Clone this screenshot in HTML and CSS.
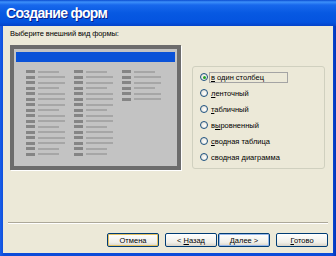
FILE: index.html
```html
<!DOCTYPE html>
<html lang="ru">
<head>
    <meta charset="UTF-8">
    <title>Создание форм</title>
    <link rel="stylesheet" href="styles.css">
</head>
<body>
    <div class="window">
        <div class="titlebar">Создание форм</div>
        <div class="client">
            <div class="prompt">Выберите внешний вид формы:</div>
            <div class="content">
                <div class="preview">
                    <div class="preview-head"></div>
                    <div class="preview-cols">
                        <div class="pcol">
                            <div class="prow"><i></i><b class="short"></b></div>
                            <div class="prow"><i></i><b></b></div>
                            <div class="prow"><i></i><b></b></div>
                            <div class="prow"><i></i><b class="short"></b></div>
                            <div class="prow"><i></i><b></b></div>
                            <div class="prow"><i></i><b></b></div>
                            <div class="prow"><i></i><b></b></div>
                            <div class="prow"><i></i><b class="short"></b></div>
                            <div class="prow"><i></i><b></b></div>
                            <div class="prow"><i></i><b></b></div>
                            <div class="prow"><i></i><b class="short"></b></div>
                            <div class="prow"><i></i><b></b></div>
                            <div class="prow"><i></i><b></b></div>
                            <div class="prow"><i></i><b></b></div>
                            <div class="prow"><i></i><b class="short"></b></div>
                            <div class="prow"><i></i><b class="short"></b></div>
                        </div>
                        <div class="pcol">
                            <div class="prow"><i></i><b class="short"></b></div>
                            <div class="prow"><i></i><b></b></div>
                            <div class="prow"><i></i><b></b></div>
                            <div class="prow"><i></i><b class="short"></b></div>
                            <div class="prow"><i></i><b></b></div>
                            <div class="prow"><i></i><b></b></div>
                            <div class="prow"><i></i><b></b></div>
                            <div class="prow"><i></i><b class="short"></b></div>
                            <div class="prow"><i></i><b></b></div>
                            <div class="prow"><i></i><b></b></div>
                            <div class="prow"><i></i><b class="short"></b></div>
                            <div class="prow"><i></i><b></b></div>
                            <div class="prow"><i></i><b></b></div>
                            <div class="prow"><i></i><b></b></div>
                            <div class="prow"><i></i><b class="short"></b></div>
                            <div class="prow"><i></i><b class="short"></b></div>
                        </div>
                        <div class="pcol">
                            <div class="prow"><i></i><b class="short"></b></div>
                            <div class="prow"><i></i><b></b></div>
                            <div class="prow"><i></i><b></b></div>
                            <div class="prow"><i></i><b class="short"></b></div>
                            <div class="prow"><i></i><b></b></div>
                            <div class="prow"><i></i><b></b></div>
                        </div>
                    </div>
                </div>
                <div class="options">
                    <div class="opt"><span class="radio checked"></span><span class="opt-text focus"><u>в</u> один столбец</span></div>
                    <div class="opt"><span class="radio"></span><span class="opt-text"><u>л</u>енточный</span></div>
                    <div class="opt"><span class="radio"></span><span class="opt-text"><u>т</u>абличный</span></div>
                    <div class="opt"><span class="radio"></span><span class="opt-text">в<u>ы</u>ровненный</span></div>
                    <div class="opt"><span class="radio"></span><span class="opt-text"><u>с</u>водная таблица</span></div>
                    <div class="opt"><span class="radio"></span><span class="opt-text">сводная <u>д</u>иаграмма</span></div>
                </div>
            </div>
            <div class="footer">
                <div class="separator"></div>
                <div class="buttons">
                    <button class="btn btn-cancel">Отмена</button>
                    <button class="btn btn-back">&lt; <u>Н</u>азад</button>
                    <button class="btn btn-next"><u>Д</u>алее &gt;</button>
                    <button class="btn btn-finish"><u>Г</u>отово</button>
                </div>
            </div>
        </div>
    </div>
</body>
</html>
```

FILE: styles.css
```css
* {
    margin: 0;
    padding: 0;
    box-sizing: border-box;
}

body {
    font-family: "Liberation Sans", Arial, sans-serif;
    background-color: #0b4bd9;
    width: 336px;
    height: 256px;
    overflow: hidden;
}


.window {
    display: flex;
    flex-direction: column;
    width: 336px;
    height: 256px;
    background: linear-gradient(to right, #1a5fe8, #0b4bd9 4px, #0b4bd9 calc(100% - 4px), #0035b8);
}


.titlebar {
    height: 26px;
    line-height: 27px;
    padding-left: 6px;
    color: #fff;
    font-size: 14px;
    font-weight: bold;
    letter-spacing: -0.7px;
    text-shadow: 1px 1px 0 #0a1f8a;
    background: linear-gradient(to bottom, #0a4bd0 0, #3d90fa 2px, #1868ec 5px, #0759e2 50%, #0453df 85%, #0443c9 100%);
}


.client {
    flex: 1;
    display: flex;
    flex-direction: column;
    margin: 0 3px 3px 3px;
    background-color: #ece9d8;
    font-size: 7.5px;
    color: #000;
}


.prompt {
    padding: 3px 0 0 7px;
    line-height: 10px;
    letter-spacing: -0.1px;
}


.content {
    display: flex;
    align-items: flex-start;
    gap: 11px;
    padding-left: 7px;
    margin-top: 6px;
}


.preview {
    width: 171px;
    height: 125px;
    padding: 3px 2px;
    background-color: #c3c3c3;
    border: 4px solid #6c6c6c;
    box-shadow: 1px 1px 0 #fff;
}


.preview-head {
    height: 10px;
    background-color: #0a52d8;
}


.preview-cols {
    display: grid;
    grid-template-columns: 39px 39px 39px;
    column-gap: 9px;
    align-items: start;
    padding: 8px 0 0 10px;
}


.pcol {
    display: flex;
    flex-direction: column;
    gap: 2.5px;
}


.prow {
    display: flex;
    align-items: center;
    gap: 3px;
    height: 3px;
}


.prow i {
    width: 9px;
    height: 3px;
    background-color: #858585;
}


.prow b {
    width: 27px;
    height: 2px;
    background-color: #a6a6a6;
}


.prow b.short {
    width: 21px;
}


.options {
    width: 133px;
    height: 103px;
    margin-top: 21px;
    padding: 2px 0 0 7px;
    border: 1px solid #d0d0bf;
    border-radius: 3px;
}


.opt {
    display: flex;
    align-items: center;
    height: 16px;
}


.radio {
    width: 8px;
    height: 8px;
    margin-right: 1px;
    border: 1px solid #1c5180;
    border-radius: 50%;
    background: radial-gradient(circle at 60% 60%, #fff, #dcd8cb);
    display: flex;
    justify-content: center;
    align-items: center;
}


.radio.checked::after {
    content: "";
    width: 3px;
    height: 3px;
    border-radius: 50%;
    background-color: #21a121;
}


.opt-text {
    padding: 0 2px;
    line-height: 9px;
}


.opt-text.focus {
    width: 79px;
    height: 11px;
    border: 1px solid #a4a4a4;
    padding: 0 1px;
}


.footer {
    margin-top: auto;
    padding: 0 5px 6px 5px;
}


.separator {
    height: 2px;
    border-top: 1px solid #aca899;
    border-bottom: 1px solid #fff;
}


.buttons {
    display: flex;
    justify-content: flex-end;
    margin-top: 9px;
}


.btn {
    width: 52px;
    height: 14px;
    margin-left: 6px;
    font-family: "Liberation Sans", Arial, sans-serif;
    font-size: 7.5px;
    color: #000;
    border: 1px solid #003c74;
    border-radius: 2px;
    background: linear-gradient(to bottom, #fff, #f0efe9 70%, #d8d3c8);
}


.btn-next {
    margin-left: 1px;
    box-shadow: inset 0 0 0 1px #98b8ea;
}


.btn-cancel {
    box-shadow: inset 0 0 0 1px #e5c365;
}
```
